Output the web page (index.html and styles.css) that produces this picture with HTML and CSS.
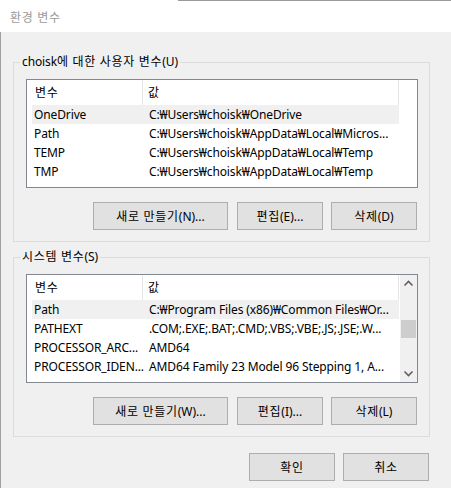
FILE: index.html
```html
<!DOCTYPE html>
<html lang="ko">
<head>
<meta charset="utf-8">
<title>환경 변수</title>
<link rel="stylesheet" href="styles.css">
</head>
<body>
<div class="window">
  <div class="titlebar"><span class="ko">환경 변수</span></div>
  <div class="content">
    <fieldset class="group group-user">
      <legend>choisk<span class="ko">에 대한 사용자 변수</span>(U)</legend>
      <div class="list">
        <div class="list-body">
          <div class="list-head"><span class="h-name ko">변수</span><span class="h-val ko">값</span></div>
          <div class="row sel"><span class="c-name">OneDrive</span><span class="c-val">C:₩Users₩choisk₩OneDrive</span></div>
          <div class="row"><span class="c-name">Path</span><span class="c-val">C:₩Users₩choisk₩AppData₩Local₩Micros...</span></div>
          <div class="row"><span class="c-name">TEMP</span><span class="c-val">C:₩Users₩choisk₩AppData₩Local₩Temp</span></div>
          <div class="row"><span class="c-name">TMP</span><span class="c-val">C:₩Users₩choisk₩AppData₩Local₩Temp</span></div>
        </div>
      </div>
      <div class="btn-row">
        <button class="btn btn-wide"><span class="ko">새로 만들기</span>(N)...</button>
        <button class="btn"><span class="ko">편집</span>(E)...</button>
        <button class="btn"><span class="ko">삭제</span>(D)</button>
      </div>
    </fieldset>
    <fieldset class="group group-sys">
      <legend><span class="ko">시스템 변수</span>(S)</legend>
      <div class="list">
        <div class="list-body">
          <div class="list-head"><span class="h-name ko">변수</span><span class="h-val ko">값</span></div>
          <div class="row sel"><span class="c-name">Path</span><span class="c-val">C:₩Program Files (x86)₩Common Files₩Or...</span></div>
          <div class="row"><span class="c-name">PATHEXT</span><span class="c-val">.COM;.EXE;.BAT;.CMD;.VBS;.VBE;.JS;.JSE;.W...</span></div>
          <div class="row"><span class="c-name">PROCESSOR_ARC...</span><span class="c-val">AMD64</span></div>
          <div class="row"><span class="c-name">PROCESSOR_IDEN...</span><span class="c-val">AMD64 Family 23 Model 96 Stepping 1, A...</span></div>
        </div>
        <div class="scrollbar">
          <svg class="arrow" width="17" height="17" viewBox="0 0 17 17"><polyline points="4.5,10.5 8.5,6.5 12.5,10.5" fill="none" stroke="#606060" stroke-width="1.6"/></svg>
          <div class="track"><div class="thumb"></div></div>
          <svg class="arrow" width="17" height="17" viewBox="0 0 17 17"><polyline points="4.5,6.5 8.5,10.5 12.5,6.5" fill="none" stroke="#606060" stroke-width="1.6"/></svg>
        </div>
      </div>
      <div class="btn-row">
        <button class="btn btn-wide"><span class="ko">새로 만들기</span>(W)...</button>
        <button class="btn"><span class="ko">편집</span>(I)...</button>
        <button class="btn"><span class="ko">삭제</span>(L)</button>
      </div>
    </fieldset>
    <div class="dialog-buttons">
      <button class="btn"><span class="ko">확인</span></button>
      <button class="btn"><span class="ko">취소</span></button>
    </div>
  </div>
</div>
</body>
</html>
```

FILE: styles.css
```css
html, body {
  margin: 0;
  padding: 0;
  background: #f0f0f0;
}

body {
  font-family: "Segoe UI", "Noto Sans", "Noto Sans CJK KR", sans-serif;
  font-size: 12px;
  letter-spacing: -0.12px;
  color: #000;
}

.ko {
  letter-spacing: 0.7px;
}

.window {
  width: 451px;
  height: 488px;
  display: flex;
  flex-direction: column;
  background: #f0f0f0;
  overflow: hidden;
}

.titlebar {
  height: 32px;
  flex: none;
  box-sizing: border-box;
  background: #fff;
  color: #9a9a9a;
  padding-left: 10px;
  line-height: 34px;
  font-size: 12px;
  border-top: 1px solid transparent;
  background-image: linear-gradient(#9a9a9a, #9a9a9a);
  background-size: 273px 1px;
  background-position: 178px 0;
  background-repeat: no-repeat;
  background-origin: border-box;
}

.content {
  flex: 1;
  border-left: 1px solid #a0a0a0;
  padding: 0 21px 0 12px;
  display: flex;
  flex-direction: column;
}

.group {
  margin: 0;
  border: 1px solid #dcdcdc;
  padding: 9px 11px 11px 12px;
  min-width: 0;
}

.group-user {
  margin-top: 22px;
}

.group-sys {
  margin-top: 7px;
}

.group legend {
  padding: 0 2px;
  margin-left: -6px;
  line-height: 16px;
  height: 16px;
}

.list {
  height: 109px;
  box-sizing: border-box;
  border: 1px solid #828790;
  background: #fff;
  display: flex;
}

.list-body {
  width: 367px;
  margin-left: 5px;
  flex: none;
}

.list-head {
  display: flex;
  height: 25px;
  line-height: 25px;
}

.h-name {
  width: 111px;
  padding-left: 3px;
  box-sizing: border-box;
  border-right: 1px solid #e5e5e5;
}

.h-val {
  flex: 1;
  padding-left: 5px;
  border-right: 1px solid #e5e5e5;
}

.row {
  display: flex;
  height: 19px;
  line-height: 19px;
  white-space: nowrap;
}

.row.sel {
  background: #f0f0f0;
}

.c-name {
  width: 115px;
  flex: none;
  padding-left: 2px;
  box-sizing: border-box;
  overflow: hidden;
}

.c-val {
  flex: 1;
  padding-left: 2px;
  overflow: hidden;
}

.scrollbar {
  width: 17px;
  margin-left: auto;
  background: #f0f0f0;
  display: flex;
  flex-direction: column;
}

.arrow {
  display: block;
  flex: none;
}

.track {
  flex: 1;
  padding-top: 28px;
}

.thumb {
  height: 18px;
  width: 15px;
  margin-left: 1px;
  background: #cdcdcd;
}

.btn-row {
  display: flex;
  justify-content: flex-end;
  gap: 8px;
  margin-top: 14px;
  margin-right: 1px;
}

.btn {
  font: inherit;
  color: #000;
  height: 28px;
  width: 86px;
  padding: 0;
  margin: 0;
  background: #e1e1e1;
  border: 1px solid #adadad;
  border-radius: 0;
  box-sizing: border-box;
}

.btn-wide {
  width: 135px;
  margin-right: 1px;
}

.dialog-buttons {
  display: flex;
  justify-content: flex-end;
  gap: 8px;
  margin-top: 16px;
  margin-right: 1px;
}
```
